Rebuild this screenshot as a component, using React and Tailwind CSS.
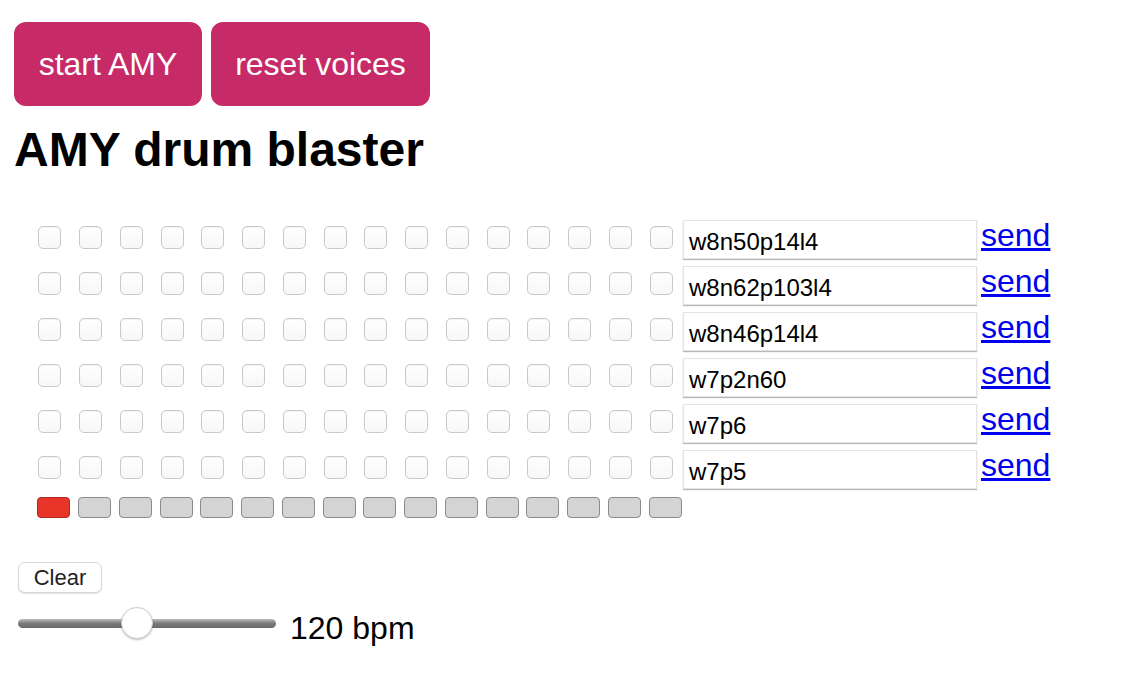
import React from "react";

const patterns = ["w8n50p14l4", "w8n62p103l4", "w8n46p14l4", "w7p2n60", "w7p6", "w7p5"];
const steps = Array.from({ length: 16 }, (_, i) => i);

function Cell({ last, children }) {
  return <div className={last ? "w-[38.25px] shrink-0" : "w-[40.75px] shrink-0"}>{children}</div>;
}

function DrumRow({ pattern }) {
  return (
    <div className="flex items-start h-[46px]">
      {steps.map((i) => (
        <Cell key={i} last={i === 15}>
          <input
            type="checkbox"
            className="appearance-none block mt-[6px] ml-[4.8px] w-[23px] h-[23px] rounded-[5px] border border-[#c9c9c9] bg-gradient-to-b from-white to-[#f7f7f7] shadow-[inset_0_1px_1px_rgba(0,0,0,0.05)]"
          />
        </Cell>
      ))}
      <input
        type="text"
        defaultValue={pattern}
        className="w-[294px] h-[39px] shrink-0 pl-[5px] pt-[4px] text-[24px] text-black border border-[#e4e4e4] shadow-[0_1px_1px_rgba(0,0,0,0.28)] outline-none bg-white"
      />
      <a href="#" className="ml-[4px] -mt-[3px] text-[32px] leading-[37px] text-[#0000ee] underline">
        send
      </a>
    </div>
  );
}

export default function App() {
  return (
    <div className="pt-[22px] pl-[14px] font-['Liberation_Sans',Arial,sans-serif] text-black bg-white min-h-screen">
      <div className="flex gap-[9px]">
        <button className="h-[84px] w-[188px] rounded-[12px] bg-[#c62a67] text-white text-[32px] leading-[36px]">
          start AMY
        </button>
        <button className="h-[84px] w-[219px] rounded-[12px] bg-[#c62a67] text-white text-[32px] leading-[36px]">
          reset voices
        </button>
      </div>

      <h1 className="mt-[16px] text-[48px] leading-[55px] font-bold">AMY drum blaster</h1>

      {/* sequencer grid */}
      <div className="mt-[43px] ml-[19.5px]">
        {patterns.map((p) => (
          <DrumRow key={p} pattern={p} />
        ))}
        <div className="flex mt-[1px]">
          {steps.map((i) => (
            <Cell key={i} last={i === 15}>
              <div
                className={
                  i === 0
                    ? "ml-[3.8px] w-[33px] h-[21px] rounded-[4px] border border-[#b0281f] bg-[#e8352a]"
                    : "ml-[3.8px] w-[33px] h-[21px] rounded-[4px] border border-[#8c8c8c] bg-[#d4d4d4]"
                }
              />
            </Cell>
          ))}
        </div>
      </div>

      <button className="mt-[44px] ml-[4px] w-[84px] h-[31px] rounded-[7px] border border-[#d6d6d6] bg-white text-[22px] leading-[24px] text-[#222] shadow-[0_1px_1px_rgba(0,0,0,0.12)]">
        Clear
      </button>

      <div className="flex items-start mt-[14px] ml-[4px]">
        <div className="relative w-[258px] h-[32px] flex items-center">
          <div className="w-full h-[9px] rounded-full bg-gradient-to-b from-[#bdbdbd] via-[#7a7a7a] to-[#6a6a6a]" />
          <div className="absolute left-[103px] top-0 w-[32px] h-[32px] rounded-full bg-white border border-[#cfcfcf] shadow-[0_1px_2px_rgba(0,0,0,0.25)]" />
        </div>
        <span className="ml-[14px] mt-[3px] text-[32px] leading-[37px]">120 bpm</span>
      </div>
    </div>
  );
}
